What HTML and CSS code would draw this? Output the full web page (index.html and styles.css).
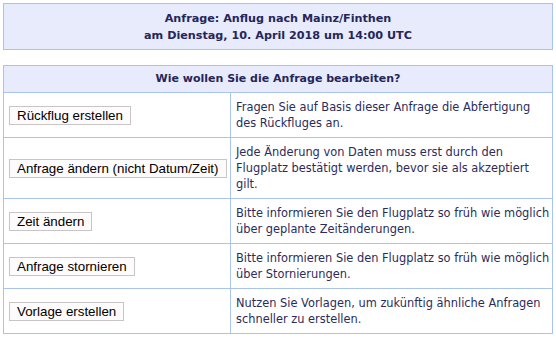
FILE: index.html
```html
<!DOCTYPE html>
<html lang="de">
<head>
    <meta charset="UTF-8">
    <title>Anfrage bearbeiten</title>
    <link rel="stylesheet" href="styles.css">
</head>
<body>
    <div class="request-box">
        <div>Anfrage: Anflug nach Mainz/Finthen</div>
        <div>am Dienstag, 10. April 2018 um 14:00 UTC</div>
    </div>

    <table class="actions">
        <thead>
            <tr>
                <th colspan="2">Wie wollen Sie die Anfrage bearbeiten?</th>
            </tr>
        </thead>
        <tbody>
            <tr>
                <td class="action-cell"><button class="action-btn">Rückflug erstellen</button></td>
                <td class="info-cell">Fragen Sie auf Basis dieser Anfrage die Abfertigung<br>des Rückfluges an.</td>
            </tr>
            <tr>
                <td class="action-cell"><button class="action-btn">Anfrage ändern (nicht Datum/Zeit)</button></td>
                <td class="info-cell">Jede Änderung von Daten muss erst durch den Flugplatz bestätigt werden, bevor sie als akzeptiert gilt.</td>
            </tr>
            <tr>
                <td class="action-cell"><button class="action-btn">Zeit ändern</button></td>
                <td class="info-cell">Bitte informieren Sie den Flugplatz so früh wie möglich über geplante Zeitänderungen.</td>
            </tr>
            <tr>
                <td class="action-cell"><button class="action-btn">Anfrage stornieren</button></td>
                <td class="info-cell">Bitte informieren Sie den Flugplatz so früh wie möglich über Stornierungen.</td>
            </tr>
            <tr>
                <td class="action-cell"><button class="action-btn">Vorlage erstellen</button></td>
                <td class="info-cell">Nutzen Sie Vorlagen, um zukünftig ähnliche Anfragen schneller zu erstellen.</td>
            </tr>
        </tbody>
    </table>
</body>
</html>
```

FILE: styles.css
```css
* {
    box-sizing: border-box;
}

body {
    margin: 0;
    padding: 3px;
    background: #fff;
    color: #25265a;
    font-family: "DejaVu Sans", Verdana, sans-serif;
    font-size: 11px;
}

.request-box {
    background: #e8ebfb;
    border: 1px solid #a9c3ef;
    padding: 6px 0 5px;
    text-align: center;
    font-weight: bold;
    font-size: 11.2px;
    line-height: 17px;
}

.actions {
    width: 100%;
    margin-top: 15px;
    border-collapse: collapse;
    border: 1px solid #a9c3ef;
}

.actions th {
    background: #e8ebfb;
    padding: 6px;
    line-height: 14px;
    font-weight: bold;
    text-align: center;
    border-bottom: 1px solid #a9c3ef;
}

.actions td {
    border-top: 1px solid #a9c3ef;
    padding: 6px 0 6px 5px;
    vertical-align: middle;
    line-height: 16px;
}

.action-cell {
    width: 227px;
    border-right: 1px solid #a9c3ef;
}

.info-cell {
    color: #2c2c5c;
    font-size: 11.4px;
}

.action-btn {
    font-family: "Liberation Sans", Arial, sans-serif;
    font-size: 13.33px;
    color: #000;
    background: #fdfbfb;
    border: 1px solid #c9c5c5;
    border-radius: 0;
    padding: 0 7px;
    height: 19px;
    line-height: 17px;
}
```
